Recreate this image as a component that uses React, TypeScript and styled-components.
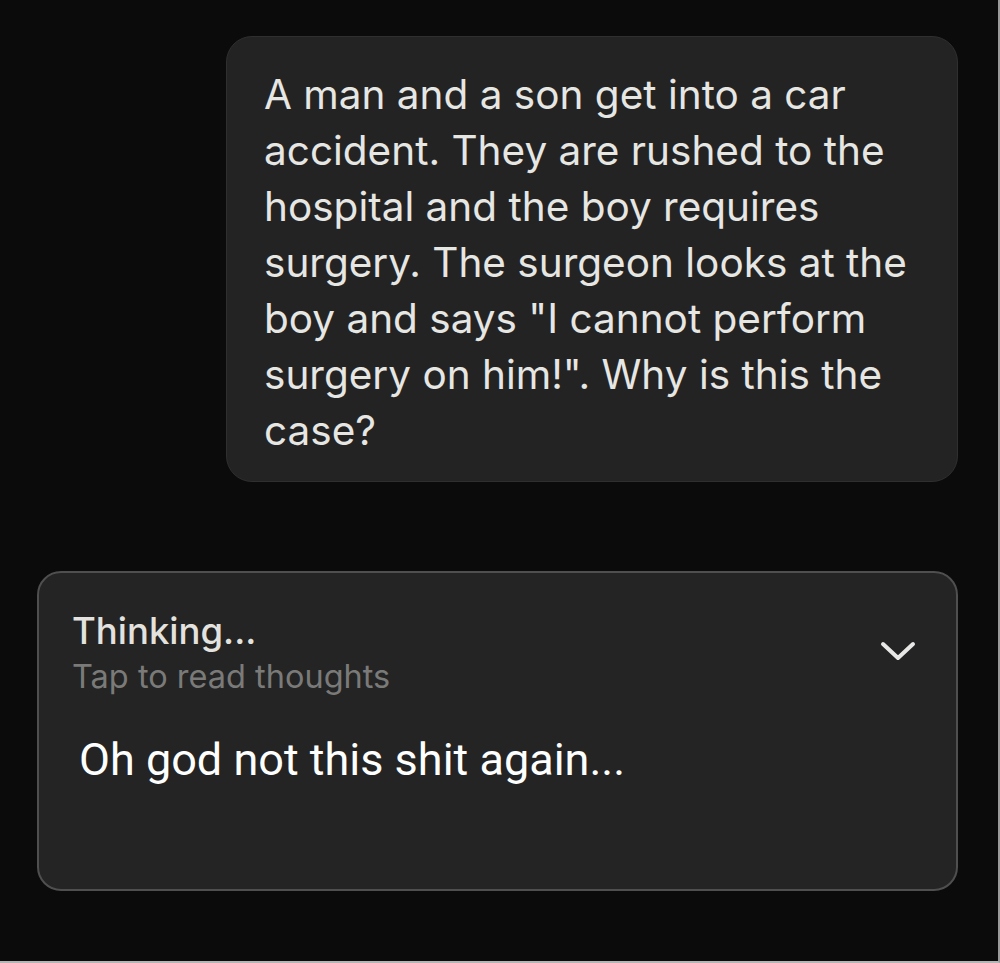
import React from "react";
import styled, { createGlobalStyle } from "styled-components";

const Global = createGlobalStyle`
  html, body { margin: 0; padding: 0; background: #0b0b0b; }
  body { width: 1000px; height: 963px; overflow: hidden; }
`;

const Page = styled.div`
  width: 1000px;
  height: 963px;
  box-sizing: border-box;
  background: #0b0b0b;
  padding-top: 36px;
  display: flex;
  flex-direction: column;
  align-items: flex-start;
  border-right: 2px solid #9a9a9a;
  border-bottom: 2px solid #b5b5b5;
`;

const UserBubble = styled.div`
  margin-left: 226px;
  width: 732px;
  height: 446px;
  box-sizing: border-box;
  background: #232323;
  border: 1.5px solid #2f2f2f;
  border-radius: 26px;
  padding: 30px 20px 24px 37px;
  font-family: Inter, "Liberation Sans", sans-serif;
  font-size: 40.5px;
  line-height: 56px;
  color: #e6e6e3;
  letter-spacing: 0;
`;

const Line = styled.div`
  white-space: nowrap;
`;

const ThinkingCard = styled.div`
  margin-top: 89px;
  margin-left: 37px;
  width: 921px;
  height: 320px;
  box-sizing: border-box;
  background: #242424;
  border: 2px solid #4f4f4f;
  border-radius: 24px;
  padding: 38px 40px 0 33px;
  display: flex;
  flex-direction: column;
`;

const Header = styled.div`
  display: flex;
  align-items: flex-start;
  justify-content: space-between;
`;

const Titles = styled.div`
  display: flex;
  flex-direction: column;
`;

const Title = styled.div`
  font-family: Inter, "Liberation Sans", sans-serif;
  font-size: 36.5px;
  font-weight: 500;
  line-height: 40px;
  color: #e3e2de;
`;

const Subtitle = styled.div`
  font-family: Inter, "Liberation Sans", sans-serif;
  font-size: 32.5px;
  line-height: 40px;
  margin-top: 6px;
  color: #7a7a79;
`;

const Chevron = styled.svg`
  margin-top: 28px;
  margin-right: 0;
  width: 36px;
  height: 24px;
`;

const Thought = styled.div`
  margin-top: 38px;
  margin-left: 7px;
  font-family: Roboto, "Liberation Sans", sans-serif;
  font-size: 45px;
  line-height: 50px;
  color: #ffffff;
  white-space: nowrap;
`;

const lines = [
  "A man and a son get into a car",
  "accident. They are rushed to the",
  "hospital and the boy requires",
  "surgery. The surgeon looks at the",
  'boy and says "I cannot perform',
  'surgery on him!". Why is this the',
  "case?",
];

export default function App() {
  return (
    <>
      <Global />
      <Page>
        <UserBubble>
          {lines.map((l, i) => (
            <Line key={i}>{l}</Line>
          ))}
        </UserBubble>
        <ThinkingCard>
          <Header>
            <Titles>
              <Title>Thinking...</Title>
              <Subtitle>Tap to read thoughts</Subtitle>
            </Titles>
            <Chevron viewBox="0 0 36 24" fill="none">
              <path
                d="M3 5 L18 19 L33 5"
                stroke="#e8e8e6"
                strokeWidth="4"
                strokeLinecap="round"
                strokeLinejoin="round"
              />
            </Chevron>
          </Header>
          <Thought>Oh god not this shit again...</Thought>
        </ThinkingCard>
      </Page>
    </>
  );
}
